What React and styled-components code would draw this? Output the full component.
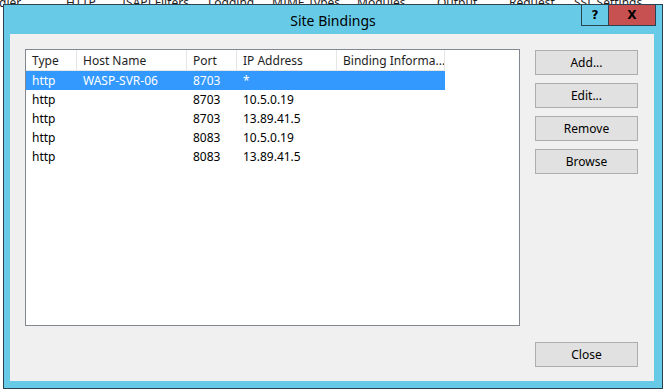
import styled, { createGlobalStyle } from 'styled-components';

const Global = createGlobalStyle`
  html, body {
    margin: 0;
    padding: 0;
    background: #ffffff;
  }
  body {
    font-family: "Noto Sans", "Open Sans", sans-serif;
    font-size: 12px;
    color: #000;
  }
`;

const Desktop = styled.div`
  position: relative;
  width: 664px;
  height: 392px;
  overflow: hidden;
  background: #ffffff;
`;

const FeatureStrip = styled.div`
  display: flex;
  margin-top: -5px;
  margin-left: -24px;
  line-height: 16px;
  color: #1e1e1e;
  white-space: nowrap;
`;

const Feature = styled.span`
  flex: none;
  width: ${(p) => p.$w}px;
`;

const Window = styled.div`
  position: absolute;
  left: 3px;
  top: 4px;
  width: 660px;
  height: 385px;
  box-sizing: border-box;
  border: 1px solid #2b4250;
  background: #67cbe8;
  display: flex;
  flex-direction: column;
`;

const TitleBar = styled.div`
  height: 29px;
  display: grid;
  grid-template-columns: 1fr auto 1fr;
  align-items: center;
`;

const Title = styled.div`
  grid-column: 2;
  font-size: 14px;
  color: #000;
  padding-top: 1px;
`;

const Caption = styled.div`
  grid-column: 3;
  justify-self: end;
  align-self: start;
  display: flex;
  margin-top: -1px;
  margin-right: 6px;
  height: 22px;
  box-sizing: border-box;
  border: 1px solid #2b4250;
`;

const CaptionButton = styled.div`
  width: ${(p) => p.$w}px;
  display: flex;
  align-items: center;
  justify-content: center;
  background: ${(p) => (p.$close ? '#c75050' : 'transparent')};
  border-right: ${(p) => (p.$close ? 'none' : '1px solid #2b4250')};
  font-family: "DejaVu Sans", sans-serif;
  font-weight: bold;
  font-size: 12px;
  color: #000;
`;

const Client = styled.div`
  margin: 0 8px 7px 6px;
  height: 347px;
  box-sizing: border-box;
  background: #f0f0f0;
  padding: 15px 16px 14px 15px;
  display: flex;
  flex-direction: column;
`;

const TopRow = styled.div`
  display: flex;
  gap: 15px;
`;

const List = styled.div`
  width: 495px;
  height: 277px;
  box-sizing: border-box;
  border: 1px solid #828790;
  background: #ffffff;
`;

const Row = styled.div`
  display: flex;
  height: ${(p) => (p.$header ? 20 : 19)}px;
  align-items: center;
  background: ${(p) => (p.$selected ? '#3399ff' : 'transparent')};
  color: ${(p) => (p.$selected ? '#ffffff' : '#000')};
  width: 419px;
  ${(p) => p.$header && 'border-bottom: 1px solid #e5e5e5; color: #1e1e1e;'}
`;

const Cell = styled.div`
  flex: none;
  width: ${(p) => p.$w}px;
  box-sizing: border-box;
  padding-left: 6px;
  height: 100%;
  display: flex;
  align-items: center;
  white-space: nowrap;
  overflow: hidden;
  ${(p) => p.$header && 'border-right: 1px solid #e5e5e5; padding-top: 1px;'}
`;

const ButtonStack = styled.div`
  display: flex;
  flex-direction: column;
  gap: 8px;
  padding-top: 1px;
`;

const Button = styled.div`
  width: 103px;
  height: 25px;
  box-sizing: border-box;
  border: 1px solid #adadad;
  background: #e1e1e1;
  display: flex;
  align-items: center;
  justify-content: center;
  color: #000;
`;

const Footer = styled.div`
  margin-top: 16px;
  display: flex;
  justify-content: flex-end;
`;

const features = [
  ['Handler', 90],
  ['HTTP', 56],
  ['ISAPI Filters', 86],
  ['Logging', 64],
  ['MIME Types', 85],
  ['Modules', 80],
  ['Output', 72],
  ['Request', 65],
  ['SSL Settings', 100],
];

const columns = [
  ['Type', 51],
  ['Host Name', 110],
  ['Port', 50],
  ['IP Address', 100],
  ['Binding Informa...', 108],
];

const bindings = [
  ['http', 'WASP-SVR-06', '8703', '*', ''],
  ['http', '', '8703', '10.5.0.19', ''],
  ['http', '', '8703', '13.89.41.5', ''],
  ['http', '', '8083', '10.5.0.19', ''],
  ['http', '', '8083', '13.89.41.5', ''],
];

export default function App() {
  return (
    <Desktop>
      <Global />
      <FeatureStrip>
        {features.map(([name, w]) => (
          <Feature key={name} $w={w}>
            {name}
          </Feature>
        ))}
      </FeatureStrip>
      <Window>
        <TitleBar>
          <Title>Site Bindings</Title>
          <Caption>
            <CaptionButton $w={26}>?</CaptionButton>
            <CaptionButton $w={46} $close>
              X
            </CaptionButton>
          </Caption>
        </TitleBar>
        <Client>
          <TopRow>
            <List>
              <Row $header>
                {columns.map(([label, w]) => (
                  <Cell key={label} $w={w} $header>
                    {label}
                  </Cell>
                ))}
              </Row>
              {bindings.map((b, i) => (
                <Row key={i} $selected={i === 0}>
                  {b.map((v, j) => (
                    <Cell key={j} $w={columns[j][1]}>
                      {v}
                    </Cell>
                  ))}
                </Row>
              ))}
            </List>
            <ButtonStack>
              <Button>Add...</Button>
              <Button>Edit...</Button>
              <Button>Remove</Button>
              <Button>Browse</Button>
            </ButtonStack>
          </TopRow>
          <Footer>
            <Button>Close</Button>
          </Footer>
        </Client>
      </Window>
    </Desktop>
  );
}
